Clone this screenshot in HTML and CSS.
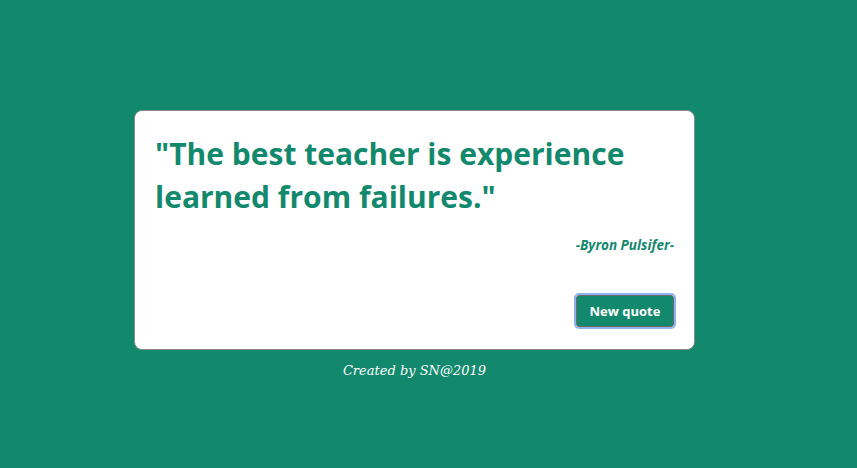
FILE: index.html
```html
<!DOCTYPE html>
<html>
<head>
<meta charset="utf-8">
<link rel="stylesheet" href="styles.css">
</head>
<body>
<main class="page">
  <div class="wrap">
    <section class="card">
      <h1 class="quote">"The best teacher is experience learned from failures."</h1>
      <p class="author">-Byron Pulsifer-</p>
      <div class="actions">
        <button class="btn">New quote</button>
      </div>
    </section>
    <p class="credit">Created by SN@2019</p>
  </div>
</main>
</body>
</html>
```

FILE: styles.css
```css
html, body {
  margin: 0;
  padding: 0;
  height: 100%;
}
body {
  background: #12896d;
  font-family: "Open Sans", "Noto Sans", sans-serif;
}
.page {
  height: 100%;
  display: flex;
  flex-direction: column;
  padding-top: 110px;
  box-sizing: border-box;
}
.wrap {
  margin-left: 134px;
  width: 561px;
}
.card {
  background: #fff;
  border: 1px solid #8a8a8a;
  border-radius: 8px;
  height: 240px;
  box-sizing: border-box;
  padding: 21px 20px 22px 20px;
  display: flex;
  flex-direction: column;
}
.quote {
  margin: 0;
  color: #12896d;
  font-size: 30px;
  line-height: 43px;
  font-weight: 700;
}
.author {
  margin: 18px 0 0 0;
  text-align: right;
  color: #12896d;
  font-size: 13.5px;
  font-weight: 700;
  font-style: italic;
}
.actions {
  margin-top: auto;
  display: flex;
  justify-content: flex-end;
}
.btn {
  background: #12896d;
  color: #fff;
  border: 1px solid #6b6b6b;
  border-radius: 3px;
  outline: 2px solid #8fb2f0;
  outline-offset: 0;
  font-family: "Open Sans", "Noto Sans", sans-serif;
  font-weight: 700;
  font-size: 13px;
  width: 98px;
  height: 32px;
  padding: 0;
}
.credit {
  margin: 13px 0 0 0;
  text-align: center;
  color: #fff;
  font-family: "DejaVu Serif", serif;
  font-style: italic;
  font-size: 13px;
}
```
